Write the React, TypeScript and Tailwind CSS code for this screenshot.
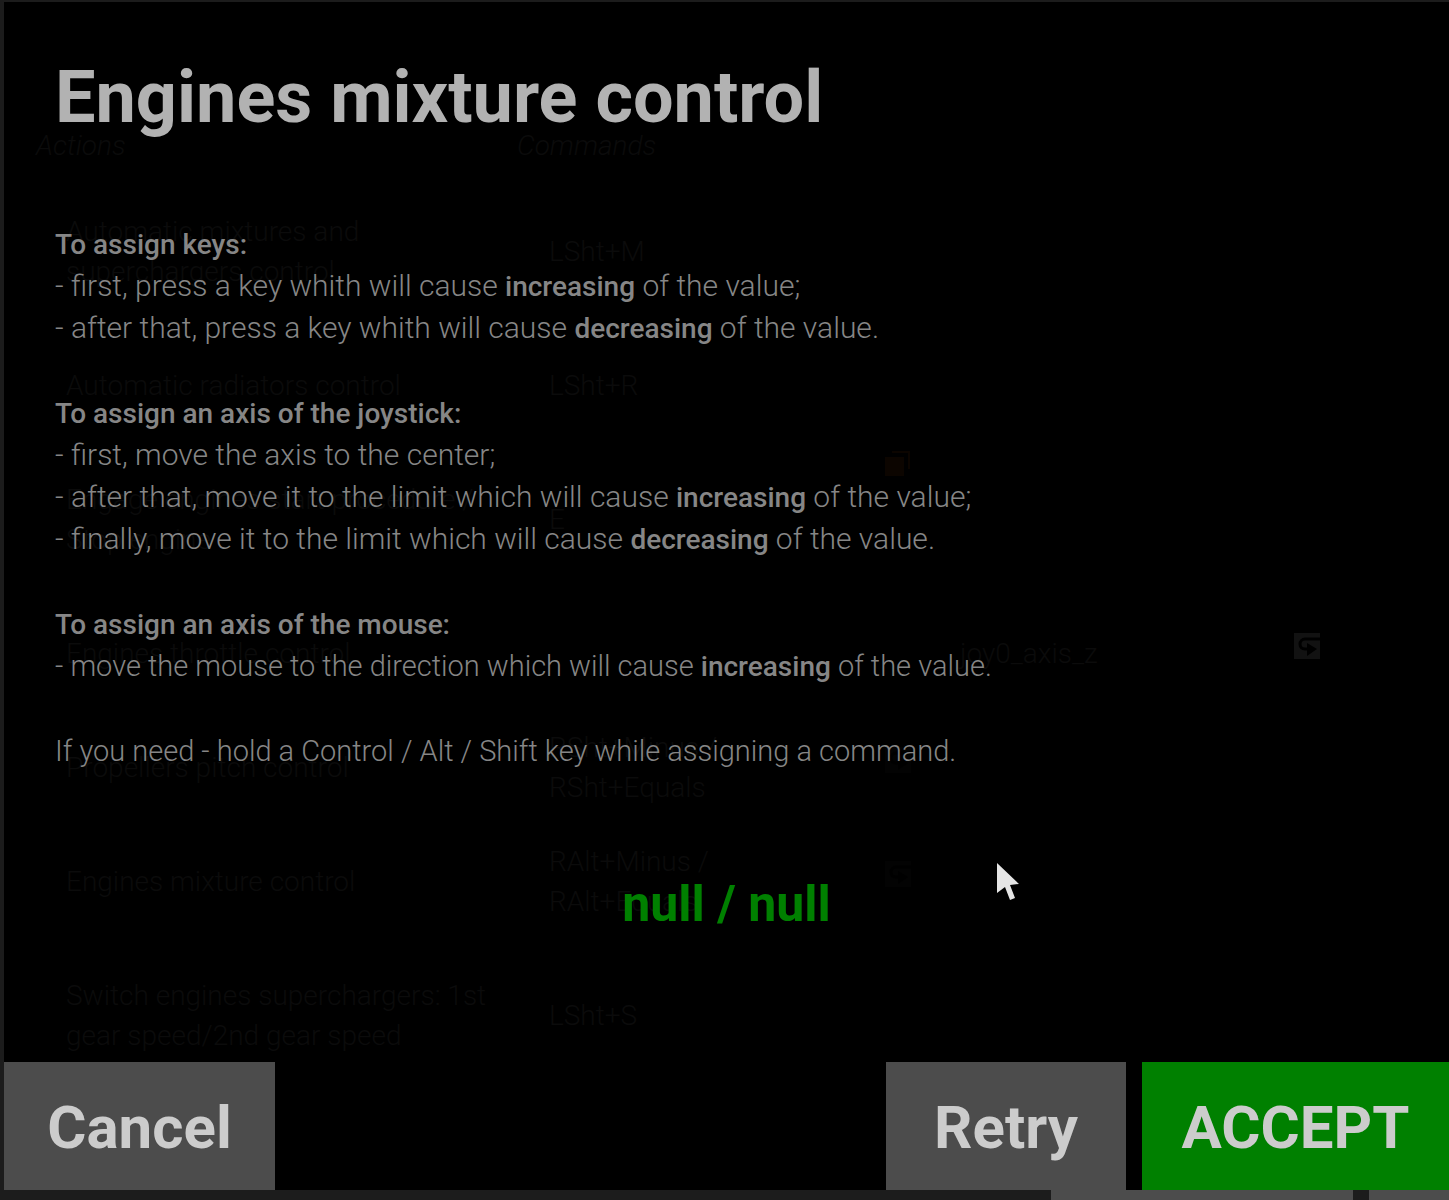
import type { ReactNode } from "react";

type Icon = "copy" | "link" | "dim";

type Row = {
  action: string[];
  command: string[];
  icon?: Icon;
  axis?: string;
  axisIcon?: Icon;
  tall?: boolean;
};

const rows: Row[] = [
  { action: ["Automatic mixtures and", "superchargers control"], command: ["LSht+M"], tall: true },
  { action: ["Automatic radiators control"], command: ["LSht+R"] },
  { action: ["Engage engines start procedure /", "Stop engine"], command: ["E"], icon: "copy", tall: true },
  { action: ["Engines throttle control"], command: [], axis: "joy0_axis_z", axisIcon: "link" },
  { action: ["Propellers pitch control"], command: ["RSht+Minus /", "RSht+Equals"], icon: "dim" },
  { action: ["Engines mixture control"], command: ["RAlt+Minus /", "RAlt+Equals"], icon: "dim" },
  { action: ["Switch engines superchargers: 1st", "gear speed/2nd gear speed"], command: ["LSht+S"], tall: true },
];

function Lines({ lines }: { lines: string[] }) {
  return (
    <>
      {lines.map((line) => (
        <div key={line}>{line}</div>
      ))}
    </>
  );
}

function CellIcon({ icon }: { icon?: Icon }) {
  if (!icon) return null;
  if (icon === "copy") {
    return (
      <svg viewBox="0 0 26 26" className="mt-2 size-[26px]" fill="#0c0500">
        <path d="M0 6h19v19H0z" />
        <path d="M7 0h18v18h-2V2H7z" />
      </svg>
    );
  }
  return (
    <svg viewBox="0 0 26 26" className="mt-9 size-[26px]">
      <path d="M0 0h26v26H0z" fill={icon === "link" ? "#121212" : "#030303"} />
      <path d="M26 6H11a5 5 0 0 0-5 5c0 3 2 5 5 5h3" fill="none" stroke="#000" strokeWidth="3" />
      <path d="M13 10l10 6-10 7z" fill="#000" />
    </svg>
  );
}

function CommandsTable() {
  return (
    <table className="col-start-1 row-start-1 w-full table-fixed self-start text-left text-[28px] leading-10 font-light text-[#0b0b0b]">
      <colgroup>
        <col className="w-[513px]" />
        <col className="w-[368px]" />
        <col className="w-[43px]" />
        <col className="w-[366px]" />
        <col />
      </colgroup>
      <thead>
        <tr className="h-[173px] italic">
          <th className="pt-[124px] pl-8 align-top font-light">Actions</th>
          <th className="pt-[124px] align-top font-light" colSpan={4}>Commands</th>
        </tr>
      </thead>
      <tbody>
        {rows.map((row) => (
          <tr key={row.action[0]} className={row.tall ? "h-[154px]" : "h-[114px]"}>
            <td className="pl-[62px] whitespace-nowrap"><Lines lines={row.action} /></td>
            <td className="pl-8"><Lines lines={row.command} /></td>
            <td className="align-top"><CellIcon icon={row.icon} /></td>
            <td className="pl-8">{row.axis}</td>
            <td className="align-top"><CellIcon icon={row.axisIcon} /></td>
          </tr>
        ))}
      </tbody>
    </table>
  );
}

function Strong({ children }: { children: ReactNode }) {
  return <b className="text-[28px] leading-none font-medium">{children}</b>;
}

function DialogButton({ className, children }: { className: string; children: ReactNode }) {
  return (
    <button type="button" className={`h-32 pt-1 text-[60px] leading-none font-bold text-[#cccccc] ${className}`}>
      {children}
    </button>
  );
}

function AssignDialog() {
  return (
    <section role="dialog" aria-labelledby="dialog-title" className="relative col-start-1 row-start-1 flex flex-col">
      <h1 id="dialog-title" className="px-[51px] pt-14 text-[72px] leading-[80px] font-bold text-[#b2b2b2]">
        Engines mixture control
      </h1>

      <div className="flex flex-col gap-[43px] px-[51px] pt-[85px] text-[30px] leading-[42px] font-light text-[#868686]">
        <div>
          <p><Strong>To assign keys:</Strong></p>
          <p>- first, press a key whith will cause <Strong>increasing</Strong> of the value;</p>
          <p>- after that, press a key whith will cause <Strong>decreasing</Strong> of the value.</p>
        </div>
        <div>
          <p><Strong>To assign an axis of the joystick:</Strong></p>
          <p>- first, move the axis to the center;</p>
          <p>- after that, move it to the limit which will cause <Strong>increasing</Strong> of the value;</p>
          <p>- finally, move it to the limit which will cause <Strong>decreasing</Strong> of the value.</p>
        </div>
        <div>
          <p><Strong>To assign an axis of the mouse:</Strong></p>
          <p className="text-[29px]">- move the mouse to the direction which will cause <Strong>increasing</Strong> of the value.</p>
        </div>
        <p className="text-[29px]">If you need - hold a Control / Alt / Shift key while assigning a command.</p>
      </div>

      <p className="pt-[102px] text-center text-[50px] leading-[60px] font-bold text-[#008000]">null / null</p>

      <div className="mt-auto flex">
        <DialogButton className="w-[271px] bg-[#4c4c4c]">Cancel</DialogButton>
        <DialogButton className="mr-4 ml-auto w-60 bg-[#4c4c4c]">Retry</DialogButton>
        <DialogButton className="w-[307px] bg-[#008000]">ACCEPT</DialogButton>
      </div>

      {/* Mouse pointer */}
      <svg viewBox="0 0 22 38" className="absolute top-[861px] left-[993px] h-[38px] w-[22px]" fill="#e5e5e5">
        <path d="M0 0l22 21-9 1 5 13-5 2-5-13-8 6z" />
      </svg>
    </section>
  );
}

export default function App() {
  return (
    <main className="flex min-h-screen flex-col bg-[#1c1c1c] pt-0.5 pl-1 font-['Roboto',sans-serif]">
      <div className="grid flex-1 bg-black">
        <CommandsTable />
        <AssignDialog />
      </div>
      <div className="flex h-2.5 justify-end gap-4">
        <div className="w-[302px] bg-[#4c4c4c]" />
        <div className="w-20 bg-[#4c4c4c]" />
      </div>
    </main>
  );
}
